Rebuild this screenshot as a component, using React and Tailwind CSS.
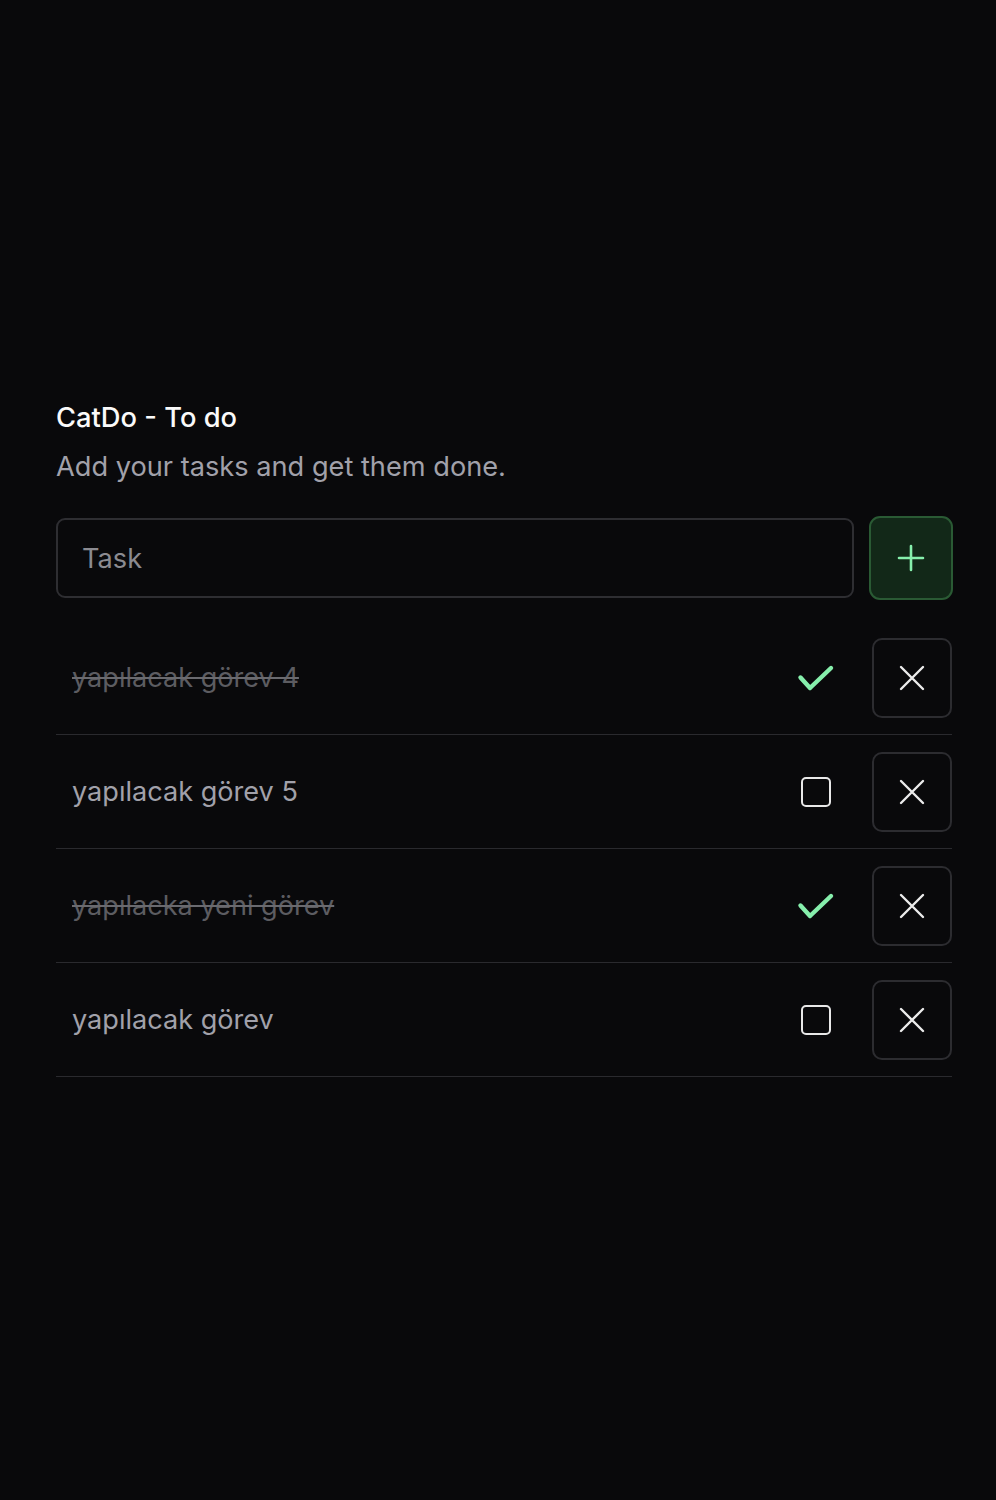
import { useState } from "react";

const initialTasks = [
  { id: 4, title: "yapılacak görev 4", done: true },
  { id: 5, title: "yapılacak görev 5", done: false },
  { id: 3, title: "yapılacka yeni görev", done: true },
  { id: 1, title: "yapılacak görev", done: false }
];

const PlusIcon = () => (
  <svg width="28" height="28" viewBox="0 0 28 28" fill="none" stroke="#86efac" strokeWidth="2.6" strokeLinecap="round">
    <path d="M14 2v24M2 14h24" />
  </svg>
);

const CheckIcon = () => (
  <svg width="40" height="40" viewBox="0 0 40 40" fill="none" stroke="#86efac" strokeWidth="4.4" strokeLinecap="round" strokeLinejoin="round">
    <path d="M4.5 19.5 14 30 35 10" />
  </svg>
);

const CloseIcon = () => (
  <svg width="26" height="26" viewBox="0 0 26 26" fill="none" stroke="#ececec" strokeWidth="2.4" strokeLinecap="round">
    <path d="M2 2 24 24M24 2 2 24" />
  </svg>
);

const TaskRow = ({ task, onToggle, onDelete }) => (
  <div className="flex items-center pt-[17px] pb-4 pl-4 border-b border-[#2a2a2e]">
    <span
      className={
        task.done
          ? "flex-1 text-[27.1px] text-[#5c5c61] line-through decoration-[#6a6a6f]"
          : "flex-1 text-[27.1px] text-[#a1a1aa]"
      }
    >
      {task.title}
    </span>
    <button
      onClick={onToggle}
      className="w-[80px] h-[80px] flex items-center justify-center"
    >
      {task.done ? (
        <CheckIcon />
      ) : (
        <span className="block w-[30px] h-[30px] rounded-[5px] border-[2.5px] border-[#e8e8e8]" />
      )}
    </button>
    <button
      onClick={onDelete}
      className="ml-4 w-[80px] h-[80px] flex items-center justify-center rounded-[10px] border-2 border-[#2c2c30]"
    >
      <CloseIcon />
    </button>
  </div>
);

export default function App() {
  const [tasks, setTasks] = useState(initialTasks);
  const [text, setText] = useState("");

  const addTask = () => {
    if (!text.trim()) return;
    setTasks(prev => [{ id: Date.now(), title: text.trim(), done: false }, ...prev]);
    setText("");
  };

  return (
    <div
      className="min-h-[1500px] bg-[#09090b] pl-14 pr-11 pt-[398px]"
      style={{ fontFamily: "Inter, 'Noto Sans', sans-serif" }}
    >
      <h1 className="text-[27.3px] leading-[40px] font-medium text-[#fafafa]">CatDo - To do</h1>
      <p className="mt-[9px] text-[27.2px] leading-[40px] text-[#a1a1aa]">
        Add your tasks and get them done.
      </p>

      <div className="mt-[29px] flex items-center gap-[15px]">
        <input
          value={text}
          onChange={e => setText(e.target.value)}
          onKeyDown={e => e.key === "Enter" && addTask()}
          placeholder="Task"
          className="flex-1 h-[80px] rounded-[9px] border-2 border-[#2e2e32] bg-transparent px-6 text-[27.2px] text-[#e4e4e7] placeholder:text-[#8b8b91] outline-none"
        />
        <button
          onClick={addTask}
          className="w-[84px] h-[84px] -mr-px flex items-center justify-center rounded-[11px] border-2 border-[#2a5a34] bg-[#122818]"
        >
          <PlusIcon />
        </button>
      </div>

      <div className="mt-[21px]">
        {tasks.map(task => (
          <TaskRow
            key={task.id}
            task={task}
            onToggle={() =>
              setTasks(prev => prev.map(t => (t.id === task.id ? { ...t, done: !t.done } : t)))
            }
            onDelete={() => setTasks(prev => prev.filter(t => t.id !== task.id))}
          />
        ))}
      </div>
    </div>
  );
}
